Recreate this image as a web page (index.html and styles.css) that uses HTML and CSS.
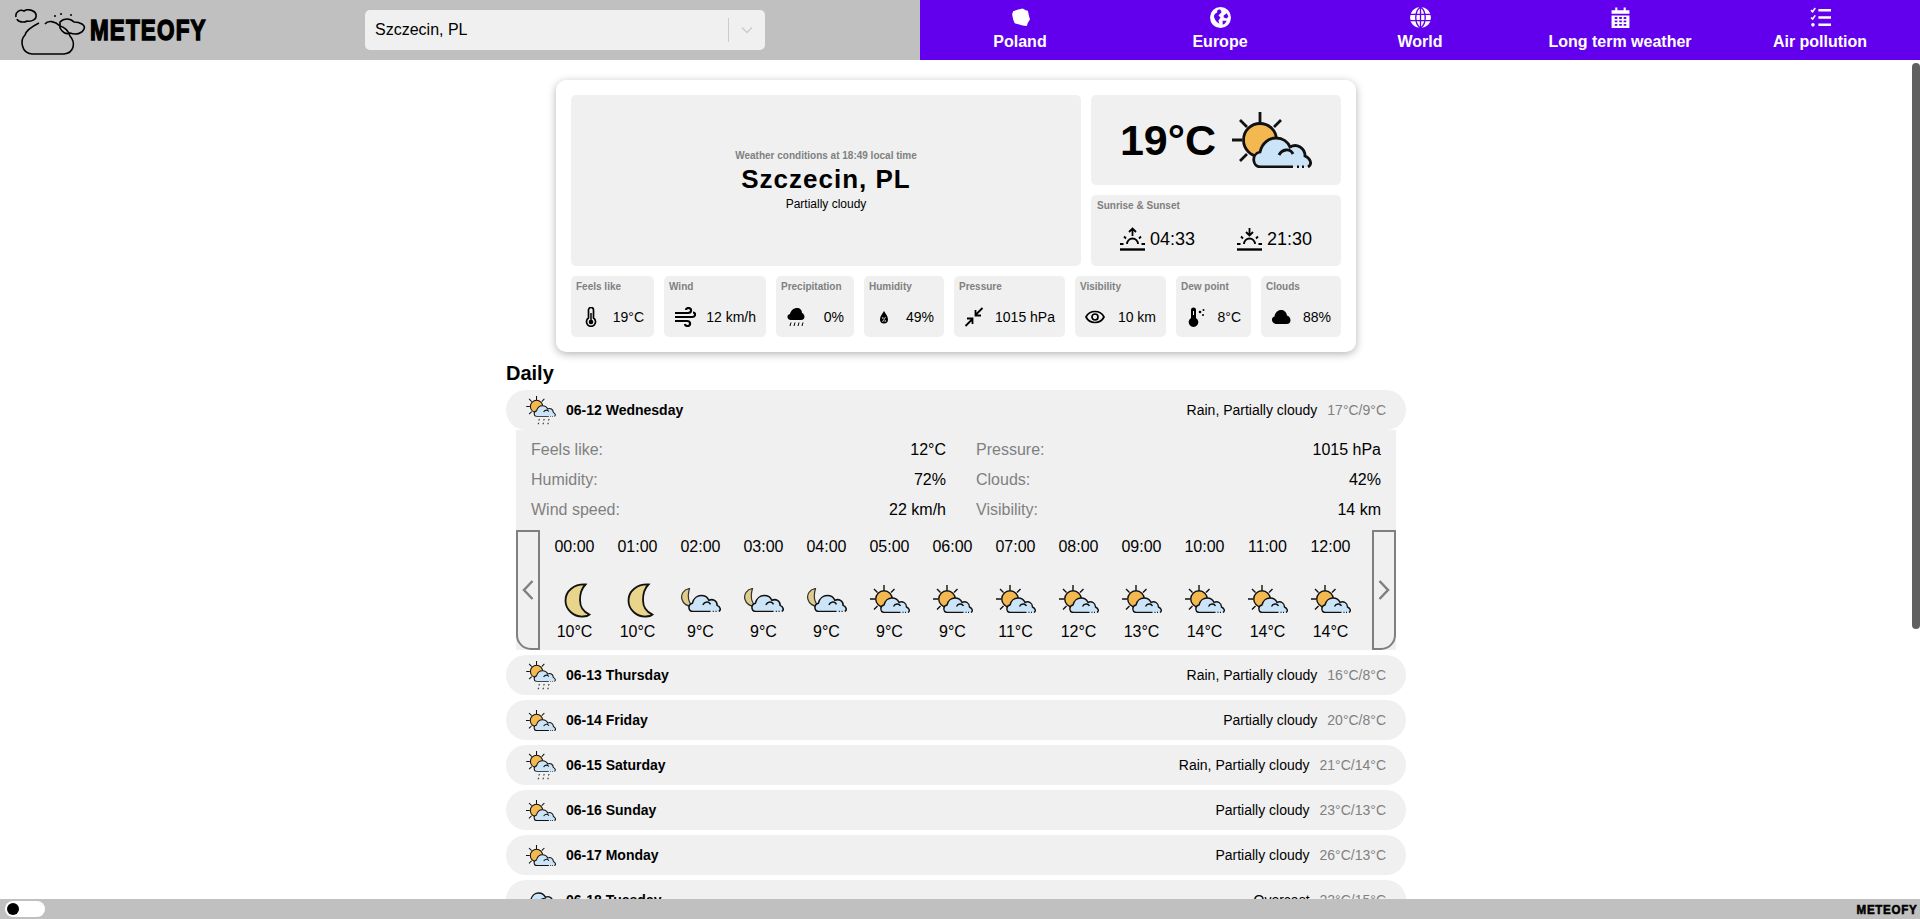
FILE: index.html
```html
<!DOCTYPE html>
<html lang="en">
<head>
  <meta charset="UTF-8">
  <title>Meteofy</title>
  <link rel="stylesheet" href="styles.css">
</head>
<body>
  <!-- shared weather icons -->
  <svg class="defs" width="0" height="0">
    <symbol id="sun-part" viewBox="0 0 80 56">
      <g fill="none" stroke="#111" stroke-width="2.800">
        <path d="M28 0V11M0 28H10M8 8L15 15M49 8L42 15M8 49L15 42"/>
        <circle cx="28" cy="28" r="16.500" fill="#f4b850"/>
      </g>
    </symbol>
    <symbol id="cloud-part" viewBox="0 0 80 56">
      <path d="M29 55C20 55 19 42 28 40C30 31 37 26 44 26C51 26 56 30 58 35C65 31 73 36 73 44C78 46 80 50 78 53L76 55Z" fill="#cce4f7"/>
      <g fill="none" stroke="#111" stroke-width="2.800">
        <path d="M61 55H29C20 55 19 42 28 40C30 31 37 26 44 26C51 26 56 30 58 35C65 31 73 36 73 44C78 46 81 52 76 55"/>
        <path d="M47 43C50 37 58 36 61 42M65 55H67M70 55H72"/>
      </g>
    </symbol>
    <symbol id="ic-partly" viewBox="0 0 80 56">
      <use href="#sun-part"/>
      <use href="#cloud-part"/>
    </symbol>
    <symbol id="ic-rain" viewBox="0 0 80 78">
      <use href="#sun-part" width="80" height="56"/>
      <use href="#cloud-part" width="80" height="56"/>
      <path d="M36 62L34 66M49 62L47 66M62 62L60 66M34 72L32 76M47 72L45 76M60 72L58 76" fill="none" stroke="#333" stroke-width="2.800"/>
    </symbol>
    <symbol id="ic-moon" viewBox="0 0 27 35">
      <path d="M21.500 1.500C10 1 1.500 8 1.500 17.500C1.500 27 10 34 19 33.500C21.500 33.500 24 33 25.500 31.500C19.500 29 16 24 16 17C16 10.500 18 5 21.500 1.500Z" fill="#e8d48a" stroke="#111" stroke-width="1.800"/>
    </symbol>
    <symbol id="ic-moon-cloud" viewBox="0 0 80 48">
      <path d="M17 1C5 3 -1 13 2 23C4.500 32 13 37 22 36C15 28 13 14 17 1Z" fill="#e0cd8a" stroke="#333" stroke-width="2.400"/>
      <g transform="translate(-8 -13.600) scale(1.100)"><use href="#cloud-part" width="80" height="56"/></g>
    </symbol>
    <symbol id="ic-cloud" viewBox="18 24 62 33">
      <use href="#cloud-part" width="80" height="56"/>
    </symbol>
    <symbol id="ic-sunrise" viewBox="0 0 25 24">
      <g fill="none" stroke="#000" stroke-width="1.800">
        <path d="M12.500 9V1.500M9 5L12.500 1.500L16 5M7 17A5.500 5.500 0 0 1 18 17M0 17H3.500M21.500 17H25M4 9.500L6 11.500M21 9.500L19 11.500"/>
        <path d="M0 22.500H25" stroke-width="2.400"/>
      </g>
    </symbol>
    <symbol id="ic-sunset" viewBox="0 0 25 24">
      <g fill="none" stroke="#000" stroke-width="1.800">
        <path d="M12.500 1V8.500M9 5L12.500 8.500L16 5M7 17A5.500 5.500 0 0 1 18 17M0 17H3.500M21.500 17H25M4 9.500L6 11.500M21 9.500L19 11.500"/>
        <path d="M0 22.500H25" stroke-width="2.400"/>
      </g>
    </symbol>
  </svg>

  <div class="app">
    <header class="topbar">
      <div class="topbar-left">
        <div class="logo">
          <svg class="logo-mark" viewBox="0 0 72 46" width="72" height="46">
            <g fill="none" stroke="#000" stroke-width="1.600">
              <path d="M2 8C1 3 6 0 10 2C14 -1 22 2 22 6C23 10 18 13 13 12C10 14 4 13 3 10"/>
              <path d="M25 14C19 17 12 22 11 26C6 31 7 44 18 45H50C60 44 62 34 56 27C54 21 50 18 46 17C41 12 34 11 31 15"/>
              <path d="M46 13C50 9 56 9 60 13C66 13 72 16 70 20C68 25 62 26 56 24C52 26 48 23 46 19Z"/>
            </g>
            <g fill="#000">
              <circle cx="41" cy="7" r="1"/>
              <circle cx="47" cy="5" r="1"/>
              <circle cx="57" cy="6" r="1"/>
            </g>
          </svg>
          <span class="logo-text">METEOFY</span>
        </div>
        <div class="city-select">
          <span class="city-value">Szczecin, PL</span>
          <span class="city-sep"></span>
          <svg class="city-arrow" viewBox="0 0 12 8" width="12" height="8"><path d="M1 1.500L6 6.500L11 1.500" fill="none" stroke="#ccc" stroke-width="1.500"/></svg>
        </div>
      </div>
      <nav class="topnav">
        <a class="nav-item">
          <svg class="nav-icon" viewBox="0 0 20 20"><path d="M3 4L7 2.500L12 1.500L15 3L17 3.500L18 8L19 12L17 15L16 18L12 17.500L8 16.500L4.500 15.500L3 12L2 7Z" fill="#fff"/></svg>
          <span>Poland</span>
        </a>
        <a class="nav-item">
          <svg class="nav-icon" viewBox="0 0 20 20"><circle cx="10" cy="10" r="10" fill="#fff"/><path d="M4 10C3 8 5 6 7 5C6 3 8 2 10 2.500L11 5L8 8L10 10L8 13L9 16C7 15 5 13 4 10ZM13 8L16 6L17.500 9L16 11L13 10ZM12 13L16 13L14 16L12 17Z" fill="#6200ee"/></svg>
          <span>Europe</span>
        </a>
        <a class="nav-item">
          <svg class="nav-icon" viewBox="0 0 20 20"><circle cx="10" cy="10" r="10" fill="#fff"/><path d="M0 7H20M0 13H20M10 0V20M10 0C4 4 4 16 10 20M10 0C16 4 16 16 10 20" fill="none" stroke="#6200ee" stroke-width="1.300"/></svg>
          <span>World</span>
        </a>
        <a class="nav-item">
          <svg class="nav-icon" viewBox="0 0 20 20">
            <path d="M2 3H5V0.500H7V3H13V0.500H15V3H18.500V6.500H1.500V3ZM1.500 8H18.500V20H1.500Z" fill="#fff"/>
            <path d="M4.500 10.500H7M8.800 10.500H11.300M13 10.500H15.500M4.500 13.700H7M8.800 13.700H11.300M13 13.700H15.500M4.500 17H7M8.800 17H11.300M13 17H15.500" stroke="#6200ee" stroke-width="1.800" fill="none"/>
          </svg>
          <span>Long term weather</span>
        </a>
        <a class="nav-item">
          <svg class="nav-icon" viewBox="0 0 20 20">
            <path d="M1 3L2.500 4.500L5 1M1 10L2.500 11.500L5 8" fill="none" stroke="#fff" stroke-width="1.500"/>
            <circle cx="2.800" cy="17" r="1.700" fill="#fff"/>
            <path d="M8 3H20M8 10H20M8 17H20" fill="none" stroke="#fff" stroke-width="2.400"/>
          </svg>
          <span>Air pollution</span>
        </a>
      </nav>
    </header>

    <main class="content">
      <section class="card">
        <div class="card-top">
          <div class="now panel">
            <div class="now-time">Weather conditions at 18:49 local time</div>
            <div class="now-city">Szczecin, PL</div>
            <div class="now-desc">Partially cloudy</div>
          </div>
          <div class="card-side">
            <div class="temp panel">
              <span class="temp-value">19°C</span>
              <svg class="temp-icon"><use href="#ic-partly"/></svg>
            </div>
            <div class="sun panel">
              <div class="label">Sunrise &amp; Sunset</div>
              <div class="sun-row">
                <div class="sun-item"><svg class="sun-icon"><use href="#ic-sunrise"/></svg><span>04:33</span></div>
                <div class="sun-item"><svg class="sun-icon"><use href="#ic-sunset"/></svg><span>21:30</span></div>
              </div>
            </div>
          </div>
        </div>
        <div class="stats">
          <div class="stat panel">
            <div class="label">Feels like</div>
            <div class="stat-body">
              <svg class="stat-icon" viewBox="0 0 20 20"><path d="M7.500 11V3A2.500 2.500 0 0 1 12.500 3V11A4.500 4.500 0 1 1 7.500 11Z" fill="none" stroke="#000" stroke-width="1.700"/><circle cx="10" cy="15" r="2.300"/><path d="M10 6V14" stroke="#000" stroke-width="1.500"/></svg>
              <span>19°C</span>
            </div>
          </div>
          <div class="stat panel">
            <div class="label">Wind</div>
            <div class="stat-body">
              <svg class="stat-icon stat-icon-wide" viewBox="0 0 22 20"><path d="M1 6H14C18 6 18 1 14.500 1C13 1 12 2 12 3M1 10H18C22 10 22 5.500 19 5.500M1 14H13C17 14 17 19 13.500 19C12 19 11 18 11 17" fill="none" stroke="#000" stroke-width="2.200"/></svg>
              <span>12 km/h</span>
            </div>
          </div>
          <div class="stat panel">
            <div class="label">Precipitation</div>
            <div class="stat-body">
              <svg class="stat-icon" viewBox="0 0 20 20"><path d="M5 13C1 13 0 8 4 7C5 3 8 1 11 1C14 1 16 3 16 6C19 7 20 13 15 13Z"/><path d="M5 15.500L4 19M9 15.500L8 19M13 15.500L12 19M17 15.500L16 19" stroke="#000" stroke-width="1"/></svg>
              <span>0%</span>
            </div>
          </div>
          <div class="stat panel">
            <div class="label">Humidity</div>
            <div class="stat-body">
              <svg class="stat-icon" viewBox="0 0 20 20"><path d="M10 4C8.500 6.500 6 9 6 12.500A4 4 0 0 0 14 12.500C14 9 11.500 6.500 10 4Z"/><path d="M11.500 10L8.500 15" stroke="#f0f0f0" stroke-width="0.800"/><circle cx="8.800" cy="11" r="0.800" fill="#f0f0f0"/><circle cx="11.200" cy="14" r="0.800" fill="#f0f0f0"/></svg>
              <span>49%</span>
            </div>
          </div>
          <div class="stat panel">
            <div class="label">Pressure</div>
            <div class="stat-body">
              <svg class="stat-icon" viewBox="0 0 20 20"><path d="M18.500 1L11.500 8M11.500 3V8.500H17M1.500 19L8.500 12M8.500 17V11.500H3" fill="none" stroke="#000" stroke-width="1.800"/></svg>
              <span>1015 hPa</span>
            </div>
          </div>
          <div class="stat panel">
            <div class="label">Visibility</div>
            <div class="stat-body">
              <svg class="stat-icon" viewBox="0 0 20 20"><path d="M1 10C3 6 6 4.500 10 4.500C14 4.500 17 6 19 10C17 14 14 15.500 10 15.500C6 15.500 3 14 1 10Z" fill="none" stroke="#000" stroke-width="1.700"/><circle cx="10" cy="10" r="3" fill="none" stroke="#000" stroke-width="1.700"/></svg>
              <span>10 km</span>
            </div>
          </div>
          <div class="stat panel">
            <div class="label">Dew point</div>
            <div class="stat-body">
              <svg class="stat-icon" viewBox="0 0 20 20"><path d="M5 11V3A2.500 2.500 0 0 1 10 3V11A4.800 4.800 0 1 1 5 11Z"/><path d="M7.500 4V8" stroke="#f0f0f0" stroke-width="1"/><circle cx="14" cy="5" r="1.300"/><circle cx="17.500" cy="3" r="1"/><circle cx="17" cy="8" r="1"/></svg>
              <span>8°C</span>
            </div>
          </div>
          <div class="stat panel">
            <div class="label">Clouds</div>
            <div class="stat-body">
              <svg class="stat-icon" viewBox="0 0 20 20"><path d="M5 17C1 17 -1 11 3.500 9.500C4 5.500 7 3 10 3C13 3 15.500 5 16 8.500C20.500 9.500 21 17 15.500 17Z"/></svg>
              <span>88%</span>
            </div>
          </div>
        </div>
      </section>

      <section class="daily">
        <h2 class="daily-title">Daily</h2>

        <div class="day">
          <svg class="day-icon day-icon-rain"><use href="#ic-rain"/></svg>
          <span class="day-date">06-12 Wednesday</span>
          <span class="day-desc">Rain, Partially cloudy</span>
          <span class="day-temp">17°C/9°C</span>
        </div>
        <div class="day-open">
          <div class="details">
            <div class="detail"><span class="detail-key">Feels like:</span><span>12°C</span></div>
            <div class="detail"><span class="detail-key">Pressure:</span><span>1015 hPa</span></div>
            <div class="detail"><span class="detail-key">Humidity:</span><span>72%</span></div>
            <div class="detail"><span class="detail-key">Clouds:</span><span>42%</span></div>
            <div class="detail"><span class="detail-key">Wind speed:</span><span>22 km/h</span></div>
            <div class="detail"><span class="detail-key">Visibility:</span><span>14 km</span></div>
          </div>
          <div class="hours">
            <button class="hour-btn hour-btn-left"><svg viewBox="0 0 12 22" width="12" height="22"><path d="M10.500 2L2 11L10.500 20" fill="none" stroke="#808080" stroke-width="2.500"/></svg></button>
            <div class="hour-list">
              <div class="hour"><span>00:00</span><svg class="hour-moon"><use href="#ic-moon"/></svg><span>10°C</span></div>
              <div class="hour"><span>01:00</span><svg class="hour-moon"><use href="#ic-moon"/></svg><span>10°C</span></div>
              <div class="hour"><span>02:00</span><svg class="hour-mooncloud"><use href="#ic-moon-cloud"/></svg><span>9°C</span></div>
              <div class="hour"><span>03:00</span><svg class="hour-mooncloud"><use href="#ic-moon-cloud"/></svg><span>9°C</span></div>
              <div class="hour"><span>04:00</span><svg class="hour-mooncloud"><use href="#ic-moon-cloud"/></svg><span>9°C</span></div>
              <div class="hour"><span>05:00</span><svg class="hour-partly"><use href="#ic-partly"/></svg><span>9°C</span></div>
              <div class="hour"><span>06:00</span><svg class="hour-partly"><use href="#ic-partly"/></svg><span>9°C</span></div>
              <div class="hour"><span>07:00</span><svg class="hour-partly"><use href="#ic-partly"/></svg><span>11°C</span></div>
              <div class="hour"><span>08:00</span><svg class="hour-partly"><use href="#ic-partly"/></svg><span>12°C</span></div>
              <div class="hour"><span>09:00</span><svg class="hour-partly"><use href="#ic-partly"/></svg><span>13°C</span></div>
              <div class="hour"><span>10:00</span><svg class="hour-partly"><use href="#ic-partly"/></svg><span>14°C</span></div>
              <div class="hour"><span>11:00</span><svg class="hour-partly"><use href="#ic-partly"/></svg><span>14°C</span></div>
              <div class="hour"><span>12:00</span><svg class="hour-partly"><use href="#ic-partly"/></svg><span>14°C</span></div>
            </div>
            <button class="hour-btn hour-btn-right"><svg viewBox="0 0 12 22" width="12" height="22"><path d="M1.500 2L10 11L1.500 20" fill="none" stroke="#808080" stroke-width="2.500"/></svg></button>
          </div>
        </div>

        <div class="day">
          <svg class="day-icon day-icon-rain"><use href="#ic-rain"/></svg>
          <span class="day-date">06-13 Thursday</span>
          <span class="day-desc">Rain, Partially cloudy</span>
          <span class="day-temp">16°C/8°C</span>
        </div>
        <div class="day">
          <svg class="day-icon"><use href="#ic-partly"/></svg>
          <span class="day-date">06-14 Friday</span>
          <span class="day-desc">Partially cloudy</span>
          <span class="day-temp">20°C/8°C</span>
        </div>
        <div class="day">
          <svg class="day-icon day-icon-rain"><use href="#ic-rain"/></svg>
          <span class="day-date">06-15 Saturday</span>
          <span class="day-desc">Rain, Partially cloudy</span>
          <span class="day-temp">21°C/14°C</span>
        </div>
        <div class="day">
          <svg class="day-icon"><use href="#ic-partly"/></svg>
          <span class="day-date">06-16 Sunday</span>
          <span class="day-desc">Partially cloudy</span>
          <span class="day-temp">23°C/13°C</span>
        </div>
        <div class="day">
          <svg class="day-icon"><use href="#ic-partly"/></svg>
          <span class="day-date">06-17 Monday</span>
          <span class="day-desc">Partially cloudy</span>
          <span class="day-temp">26°C/13°C</span>
        </div>
        <div class="day">
          <svg class="day-icon day-icon-cloud"><use href="#ic-cloud"/></svg>
          <span class="day-date">06-18 Tuesday</span>
          <span class="day-desc">Overcast</span>
          <span class="day-temp">22°C/15°C</span>
        </div>
      </section>
    </main>

    <footer class="bottombar">
      <span class="toggle"><span class="toggle-knob"></span></span>
      <span class="bottom-logo">METEOFY</span>
    </footer>

    <div class="scroll-thumb"></div>
  </div>
</body>
</html>
```

FILE: styles.css
```css
html, body {
  margin: 0;
  height: 100%;
  overflow: hidden;
}
body {
  font-family: "Liberation Sans", Arial, sans-serif;
  color: #000;
  background-color: #fff;
}
.defs {
  display: block;
  height: 0;
}
.app {
  position: relative;
  display: flex;
  flex-direction: column;
  height: 919px;
}

/* top bar */
.topbar {
  display: flex;
  flex: none;
  height: 60px;
  background-color: #c0c0c0;
}
.topbar-left {
  display: flex;
  align-items: center;
  width: 920px;
  padding-left: 14px;
  box-sizing: border-box;
}
.logo {
  display: flex;
  align-items: center;
  width: 351px;
}
.logo-mark {
  margin-top: 3px;
}
.logo-text {
  display: inline-block;
  margin-left: 4px;
  font-size: 30px;
  font-weight: bold;
  letter-spacing: 1.5px;
  -webkit-text-stroke: 1.5px #000;
  transform: scaleX(0.75);
  transform-origin: left center;
}
.city-select {
  display: flex;
  align-items: center;
  width: 400px;
  height: 40px;
  padding-left: 10px;
  box-sizing: border-box;
  border-radius: 5px;
  background-color: #f0f0f0;
  font-size: 16px;
}
.city-value {
  flex: 1;
}
.city-sep {
  width: 1px;
  height: 24px;
  background-color: #ccc;
}
.city-arrow {
  margin: 0 12px;
}
.topnav {
  display: flex;
  flex: 1;
  background-color: #6200ee;
}
.nav-item {
  display: flex;
  flex: 1;
  flex-direction: column;
  align-items: center;
  color: #fff;
  font-size: 16px;
  font-weight: bold;
}
.nav-icon {
  width: 21px;
  height: 21px;
  margin: 7px 0 5px;
}

/* content between the bars, cut off by the footer */
.content {
  flex: 1;
  overflow: hidden;
  padding-right: 8px;
}
.scroll-thumb {
  position: absolute;
  top: 63px;
  right: 0;
  width: 8px;
  height: 566px;
  border-radius: 4px;
  background-color: #606060;
}
.panel {
  border-radius: 5px;
  background-color: #f0f0f0;
}
.label {
  font-size: 10px;
  font-weight: bold;
  color: #808080;
}
.card {
  width: 800px;
  margin: 20px auto 0;
  padding: 15px;
  box-sizing: border-box;
  border-radius: 10px;
  background-color: #fff;
  box-shadow: 0 2px 8px rgba(0, 0, 0, 0.3);
}
.card-top {
  display: flex;
  gap: 10px;
}
.now {
  display: flex;
  flex-direction: column;
  align-items: center;
  justify-content: center;
  width: 510px;
  height: 171px;
}
.now-time {
  font-size: 10px;
  font-weight: bold;
  color: #808080;
}
.now-city {
  margin: 3px 0 2px;
  font-size: 26px;
  font-weight: bold;
  letter-spacing: 1px;
}
.now-desc {
  font-size: 12px;
}
.card-side {
  display: flex;
  flex: 1;
  flex-direction: column;
  gap: 10px;
}
.temp {
  display: flex;
  align-items: center;
  justify-content: center;
  gap: 16px;
  height: 90px;
}
.temp-value {
  font-size: 43px;
  font-weight: bold;
}
.temp-icon {
  width: 80px;
  height: 56px;
}
.sun {
  flex: 1;
  padding: 5px 6px;
}
.sun-row {
  display: flex;
  justify-content: center;
  gap: 42px;
  margin-top: 16px;
}
.sun-item {
  display: flex;
  align-items: center;
  gap: 5px;
  font-size: 18px;
}
.sun-icon {
  width: 25px;
  height: 24px;
}
.stats {
  display: grid;
  grid-template-columns: 83px 102px 78px 80px 111px 91px 75px 80px;
  gap: 10px;
  margin-top: 10px;
}
.stat {
  height: 61px;
  padding: 5px;
  box-sizing: border-box;
}
.stat-body {
  display: flex;
  align-items: center;
  justify-content: space-between;
  margin-top: 15px;
  padding: 0 5px;
  font-size: 14px;
}
.stat-icon {
  width: 20px;
  height: 20px;
}
.stat-icon-wide {
  width: 22px;
}

/* daily list */
.daily {
  width: 900px;
  margin: 0 auto;
}
.daily-title {
  margin: 9px 0 5px;
  font-size: 20px;
  line-height: 24px;
}
.day {
  display: flex;
  align-items: center;
  height: 40px;
  margin-bottom: 5px;
  padding: 0 20px;
  box-sizing: border-box;
  border-radius: 20px;
  background-color: #f0f0f0;
  font-size: 14px;
}
.day-icon {
  flex: none;
  width: 30px;
  height: 21px;
  margin-right: 10px;
}
.day-icon-rain {
  height: 29px;
}
.day-icon-cloud {
  height: 16px;
}
.day-date {
  flex: 1;
  font-weight: bold;
}
.day-temp {
  margin-left: 10px;
  color: #808080;
}
.day-open {
  margin: -5px 10px 5px;
  background-color: #f0f0f0;
}
.details {
  display: grid;
  grid-template-columns: 415px 405px;
  column-gap: 30px;
  padding: 5px 15px 0;
  font-size: 16px;
}
.detail {
  display: flex;
  justify-content: space-between;
  height: 30px;
  line-height: 30px;
}
.detail-key {
  color: #808080;
}
.hours {
  display: flex;
  justify-content: space-between;
  height: 120px;
  margin-top: 5px;
  font-size: 16px;
}
.hour-btn {
  display: flex;
  align-items: center;
  justify-content: center;
  width: 24px;
  height: 120px;
  padding: 0;
  border: 2px solid #808080;
  box-sizing: border-box;
  background: none;
}
.hour-btn-left {
  border-bottom-left-radius: 15px;
}
.hour-btn-right {
  border-bottom-right-radius: 15px;
}
.hour-list {
  display: flex;
  flex: 1;
  padding: 0 3px;
}
.hour {
  display: flex;
  flex: none;
  flex-direction: column;
  align-items: center;
  width: 63px;
  padding-top: 8px;
  box-sizing: border-box;
}
.hour svg {
  flex: none;
}
.hour .hour-moon {
  width: 27px;
  height: 35px;
  margin: 27px 0 5px 6px;
}
.hour .hour-mooncloud {
  width: 40px;
  height: 24px;
  margin: 32px 0 11px;
}
.hour .hour-partly {
  width: 40px;
  height: 28px;
  margin: 29px 0 10px;
}

/* bottom bar */
.bottombar {
  position: relative;
  display: flex;
  flex: none;
  align-items: center;
  justify-content: space-between;
  height: 20px;
  padding: 0 3px 0 5px;
  background-color: #c0c0c0;
}
.toggle {
  display: flex;
  align-items: center;
  width: 40px;
  height: 16px;
  padding-left: 2px;
  box-sizing: border-box;
  border-radius: 8px;
  background-color: #fff;
}
.toggle-knob {
  width: 12px;
  height: 12px;
  border-radius: 50%;
  background-color: #000;
}
.bottom-logo {
  font-size: 13px;
  font-weight: bold;
  letter-spacing: 0.8px;
  -webkit-text-stroke: 0.6px #000;
  transform: scaleX(0.89);
  transform-origin: right center;
}
```
